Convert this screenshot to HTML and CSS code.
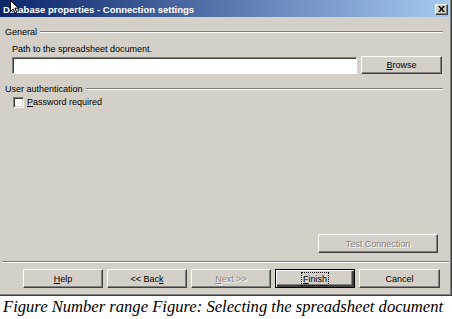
FILE: index.html
```html
<!DOCTYPE html>
<html>
<head>
<meta charset="utf-8"/>
<title>Database properties - Connection settings</title>
<link rel="stylesheet" href="styles.css">
</head>
<body>
	<div class="window">
		<!-- 标题栏 -->
		<div class="titlebar">
			<span class="title">Database properties - Connection settings</span>
			<div class="close">
				<svg width="7" height="6" viewBox="0 0 7 6"><path d="M0 0h2l1.5 2L5 0h2L4.5 3L7 6H5L3.5 4L2 6H0l2.5-3z" fill="#000"/></svg>
			</div>
		</div>
		<div class="body">
			<div class="group-title"><span>General</span><div class="line"></div></div>
			<div class="field-label">Path to the spreadsheet document.</div>
			<div class="path-row">
				<div class="textbox"></div>
				<div class="btn browse"><u>B</u>rowse</div>
			</div>
			<div class="group-title auth"><span>User authentication</span><div class="line"></div></div>
			<div class="check-row">
				<div class="checkbox"></div>
				<span><u>P</u>assword required</span>
			</div>
			<div class="spacer"></div>
			<div class="test-row">
				<div class="btn disabled test">Test Connection</div>
			</div>
		</div>
		<div class="separator"></div>
		<!-- 按钮 -->
		<div class="buttons">
			<div class="btn"><u>H</u>elp</div>
			<div class="btn">&lt;&lt; Bac<u>k</u></div>
			<div class="btn disabled"><u>N</u>ext &gt;&gt;</div>
			<div class="btn default"><span class="focus"><u>F</u>inish</span></div>
			<div class="btn cancel">Cancel</div>
		</div>
	</div>
	<div class="caption">Figure Number range Figure: Selecting the spreadsheet document</div>
	<svg class="cursor" width="10" height="14" viewBox="0 0 10 14"><path d="M0.5 0.5v11l2.6-2.6 1.8 4.1 1.8-0.8-1.8-4h3.6z" fill="#fff" stroke="#000" stroke-width="1"/></svg>
</body>
</html>
```

FILE: styles.css
```css
*{padding: 0;margin: 0;box-sizing: border-box}
body{
	background: #fff;
	font-family: "Liberation Sans", Arial, sans-serif;
	font-size: 9px;
	color: #000;
	position: relative;
	width: 452px;
	height: 319px;
	overflow: hidden;
}
.window{
	width: 452px;
	height: 296px;
	background: #d4d0c8;
	border-right: 1px solid #404040;
	border-bottom: 1px solid #404040;
	box-shadow: inset -1px -1px #808080;
	padding-right: 2px;
	display: flex;
	flex-direction: column;
}
.titlebar{
	height: 17px;
	background: linear-gradient(to right, #0a246a, #a6caf0);
	display: flex;
	align-items: center;
	justify-content: space-between;
	padding: 1px 1px 0 3px;
}
.title{
	color: #fff;
	font-weight: bold;
	font-size: 9.5px;
}
.close{
	width: 13px;
	height: 11px;
	background: #d4d0c8;
	border: 1px solid;
	border-color: #fff #404040 #404040 #fff;
	box-shadow: inset -1px -1px #808080;
	display: flex;
	align-items: center;
	justify-content: center;
}
.close svg{display: block}
.body{
	flex: 1;
	display: flex;
	flex-direction: column;
	padding: 0 6px 0 5px;
}
.group-title{
	display: flex;
	align-items: center;
	height: 11px;
	margin-top: 9px;
}
.group-title.auth{margin-top: 9px}
.group-title .line{
	flex: 1;
	margin-left: 3px;
	border-top: 1px solid #808080;
	border-bottom: 1px solid #fff;
}
.field-label{
	margin: 7px 0 0 7px;
	height: 11px;
	line-height: 11px;
}
.path-row{
	display: flex;
	align-items: center;
	margin: 1px 0 0 7px;
	height: 18px;
}
.textbox{
	width: 345px;
	height: 17px;
	background: #fff;
	border: 1px solid;
	border-color: #808080 #fff #fff #808080;
	box-shadow: inset 1px 1px #404040;
	margin-right: 4px;
}
.btn{
	height: 19px;
	width: 80px;
	display: flex;
	align-items: center;
	justify-content: center;
	background: #d4d0c8;
	border: 1px solid;
	border-color: #fff #404040 #404040 #fff;
	box-shadow: inset -1px -1px #808080;
}
.browse{
	width: 81px;
	height: 18px;
}
.btn.disabled{
	color: #808080;
	text-shadow: 1px 1px #fff;
}
.btn.default{
	border: 1px solid #000;
	box-shadow: inset 1px 1px #fff, inset -2px -2px #404040, inset -3px -3px #808080;
}
.focus{
	border: 1px dotted #000;
	padding: 1px 1px 0;
	line-height: 11px;
}
.check-row{
	display: flex;
	align-items: center;
	margin: 2px 0 0 8px;
	height: 12px;
}
.checkbox{
	width: 11px;
	height: 11px;
	background: #fff;
	border: 1px solid;
	border-color: #808080 #fff #fff #808080;
	box-shadow: inset 1px 1px #404040, inset -1px -1px #d4d0c8;
	margin-right: 3px;
}
.spacer{flex: 1}
.test-row{
	display: flex;
	justify-content: flex-end;
	padding-right: 5px;
	margin-bottom: 8px;
}
.test{width: 120px}
.separator{
	margin: 0 0 0 2px;
	border-top: 1px solid #808080;
	border-bottom: 1px solid #fff;
}
.buttons{
	display: flex;
	gap: 4px;
	padding: 6px 0 7px 23px;
}
.cancel{width: 81px}
.caption{
	font-family: "Liberation Serif", "Times New Roman", serif;
	font-style: italic;
	font-size: 16.6px;
	padding: 1px 0 0 3px;
	white-space: nowrap;
}
.cursor{
	position: absolute;
	left: 10px;
	top: 0px;
}
```
